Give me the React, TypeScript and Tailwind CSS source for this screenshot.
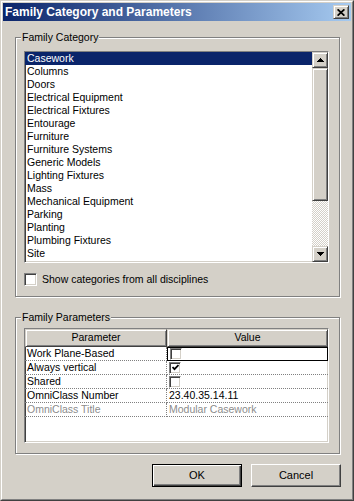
import type { ReactNode } from 'react';

const categories = [
  'Casework',
  'Columns',
  'Doors',
  'Electrical Equipment',
  'Electrical Fixtures',
  'Entourage',
  'Furniture',
  'Furniture Systems',
  'Generic Models',
  'Lighting Fixtures',
  'Mass',
  'Mechanical Equipment',
  'Parking',
  'Planting',
  'Plumbing Fixtures',
  'Site',
];

// classic 3D edges
const raised =
  'border border-t-[#d4d0c8] border-l-[#d4d0c8] border-r-[#404040] border-b-[#404040] shadow-[inset_1px_1px_0_#fff,inset_-1px_-1px_0_#808080] bg-[#d4d0c8]';
const sunken =
  'border border-t-[#808080] border-l-[#808080] border-r-white border-b-white shadow-[inset_1px_1px_0_#404040,inset_-1px_-1px_0_#d4d0c8]';

const Arrow = ({ down }: { down?: boolean }) => (
  <svg width="7" height="4" viewBox="0 0 7 4" shapeRendering="crispEdges">
    <polygon points={down ? '0,0 7,0 3.5,4' : '3.5,0 7,4 0,4'} fill="#000" />
  </svg>
);

const CheckBox = ({ checked, size = 13 }: { checked?: boolean; size?: number }) => (
  <div
    className={`${sunken} bg-white shrink-0 flex items-center justify-center`}
    style={{ width: size, height: size }}
  >
    {checked && (
      <svg width="7" height="7" viewBox="0 0 7 7">
        <path d="M0.5 3 L2.5 5.2 L6.5 1" fill="none" stroke="#000" strokeWidth="1.8" />
      </svg>
    )}
  </div>
);

const GroupBox = ({ title, children, className }: { title: string; children: ReactNode; className?: string }) => (
  <fieldset className={`w-[325px] border border-[#808080] shadow-[1px_1px_0_#fff,inset_1px_1px_0_#fff] p-0 ${className ?? ''}`}>
    <legend className="ml-[5px] px-[1px] bg-[#d4d0c8] leading-[13px] text-black">{title}</legend>
    {children}
  </fieldset>
);

const rows = [
  { name: 'Work Plane-Based', kind: 'check', checked: false, focus: true },
  { name: 'Always vertical', kind: 'check', checked: true },
  { name: 'Shared', kind: 'check', checked: false },
  { name: 'OmniClass Number', kind: 'text', value: '23.40.35.14.11' },
  { name: 'OmniClass Title', kind: 'text', value: 'Modular Casework', disabled: true },
];

export default function App() {
  return (
    <div className="w-[354px] h-[501px] bg-[#d4d0c8] border border-t-[#d4d0c8] border-l-[#d4d0c8] border-r-[#404040] border-b-[#404040] font-['Liberation_Sans',Arial,sans-serif] text-[10.5px] text-black">
      <div className="h-full border border-t-white border-l-white border-r-[#808080] border-b-[#808080] p-px flex flex-col">
        {/* Title bar */}
        <div className="h-[18px] flex items-center justify-between pl-[2px] pr-[2px] bg-[linear-gradient(to_right,#0a246a,#a6caf0)]">
          <span className="text-white font-bold text-[12px] leading-[14px]">Family Category and Parameters</span>
          <div className={`${raised} w-[16px] h-[14px] flex items-center justify-center`}>
            <svg width="8" height="7" viewBox="0 0 8 7">
              <path d="M0.6 0.3 L7.4 6.7 M7.4 0.3 L0.6 6.7" stroke="#000" strokeWidth="1.7" fill="none" />
            </svg>
          </div>
        </div>

        <div className="flex flex-col pl-[12px] pr-[10px] mt-[10px]">
          <GroupBox title="Family Category">
            <div className="pl-[8px] pt-[7px] pb-[10px]">
              <div className={`${sunken} w-[305px] h-[212px] bg-white flex`}>
                <div className="flex-1 flex flex-col">
                  {categories.map((c, i) => (
                    <div
                      key={c}
                      className={`h-[13px] leading-[13px] pl-[2px] whitespace-nowrap ${
                        i === 0 ? 'bg-[#0a246a] text-white' : ''
                      }`}
                    >
                      {c}
                    </div>
                  ))}
                </div>
                <div className="w-[16px] flex flex-col">
                  <div className={`${raised} h-[16px] flex items-center justify-center`}>
                    <Arrow />
                  </div>
                  <div className={`${raised} h-[133px]`} />
                  <div className="flex-1 bg-[image:repeating-conic-gradient(#fff_0_25%,#d4d0c8_0_50%)] bg-[length:2px_2px]" />
                  <div className={`${raised} h-[16px] flex items-center justify-center`}>
                    <Arrow down />
                  </div>
                </div>
              </div>
              <div className="flex items-center gap-[5px] mt-[10px] h-[13px]">
                <CheckBox />
                <span className="leading-[13px]">Show categories from all disciplines</span>
              </div>
            </div>
          </GroupBox>

          <GroupBox title="Family Parameters" className="mt-[14px]">
            <div className="pl-[8px] pt-[4px] pb-[10px]">
              <div className={`${sunken} w-[305px] h-[115px] bg-white flex flex-col`}>
                <div className="flex h-[18px] shrink-0">
                  <div className={`${raised} w-[142px] flex items-center justify-center`}>Parameter</div>
                  <div className={`${raised} flex-1 flex items-center justify-center`}>Value</div>
                </div>
                {rows.map((r) => (
                  <div key={r.name} className="flex h-[14px] shrink-0">
                    <div
                      className={`w-[142px] pl-[2px] leading-[13px] border-b border-r border-dotted border-[#808080] whitespace-nowrap ${
                        r.disabled ? 'text-[#8c8c8c]' : ''
                      }`}
                    >
                      {r.name}
                    </div>
                    <div
                      className={`flex-1 flex items-center pl-[2px] ${
                        r.focus ? 'border border-black' : 'border-b border-dotted border-[#808080]'
                      } ${r.disabled ? 'text-[#8c8c8c]' : ''}`}
                    >
                      {r.kind === 'check' ? (
                        <CheckBox checked={r.checked} size={12} />
                      ) : (
                        <span className="leading-[13px]">{r.value}</span>
                      )}
                    </div>
                  </div>
                ))}
              </div>
            </div>
          </GroupBox>

          <div className="flex justify-end gap-[9px] mt-[10px]">
            <button className="w-[90px] h-[23px] bg-[#d4d0c8] border border-black shadow-[inset_1px_1px_0_#fff,inset_-1px_-1px_0_#404040,inset_-2px_-2px_0_#808080] text-[11px]">
              OK
            </button>
            <button className="w-[90px] h-[23px] bg-[#d4d0c8] border border-t-white border-l-white border-r-[#404040] border-b-[#404040] shadow-[inset_-1px_-1px_0_#808080] text-[11px]">
              Cancel
            </button>
          </div>
        </div>
      </div>
    </div>
  );
}
